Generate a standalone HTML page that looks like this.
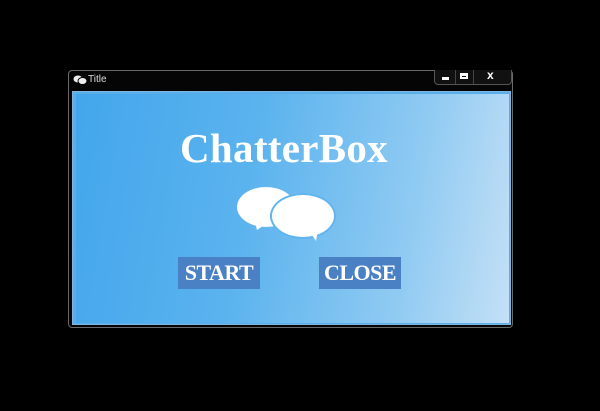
<!DOCTYPE html>
<html><head><meta charset="utf-8"><style>
html,body{margin:0;padding:0;background:#000;width:600px;height:411px;overflow:hidden;position:relative;font-family:"Liberation Serif",serif}
.frame{position:absolute;left:68px;top:70px;width:445px;height:258px;border:1px solid #6a6a6a;border-radius:4px;background:#050505;box-sizing:border-box}
.title{position:absolute;left:88px;top:74px;color:#ddd;font:10px "Liberation Sans",sans-serif}
.btns{position:absolute;left:434px;top:70px;width:78px;height:15px;border:1px solid #555;border-top:none;border-radius:0 0 4px 4px;background:#111;box-sizing:border-box}
.content{position:absolute;left:72px;top:91px;width:439px;height:234px;border:1px solid #7fb6e0;box-sizing:border-box;background:#5aaee9}
.inner{position:absolute;left:76px;top:94px;width:433px;height:229px;background:linear-gradient(100deg,#43a6ec 0%,#5bb3ee 40%,#8fcaf2 75%,#c4e0f6 100%)}
.h{position:absolute;left:0;width:568px;top:124px;text-align:center;color:#fff;font-weight:bold;font-size:41px;letter-spacing:0.3px}
.b{position:absolute;top:257px;height:32px;width:82px;background:#4a80c4;color:#fff;font-weight:bold;font-size:22px;line-height:32px;text-align:center;letter-spacing:-0.5px}
</style></head><body>
<div class="frame"></div>
<svg style="position:absolute;left:73px;top:75px" width="14" height="10"><ellipse cx="5" cy="4" rx="4.5" ry="3.5" fill="#eee"/><ellipse cx="9.5" cy="6" rx="4.5" ry="3.5" fill="#eee" stroke="#000" stroke-width="1"/></svg>
<div class="title">Title</div>
<div class="btns">
<div style="position:absolute;left:7px;top:7px;width:7px;height:3px;background:#fff"></div>
<div style="position:absolute;left:25px;top:3px;width:8px;height:6px;border:2px solid #fff;border-top-width:3px;box-sizing:border-box"></div>
<div style="position:absolute;left:20px;top:0;width:1px;height:14px;background:#444"></div>
<div style="position:absolute;left:38px;top:0;width:1px;height:14px;background:#444"></div>
<div style="position:absolute;left:52px;top:-2px;color:#fff;font:bold 12px 'Liberation Sans',sans-serif">x</div>
</div>
<div class="content"></div>
<div class="inner"></div>
<div class="h">ChatterBox</div>
<svg style="position:absolute;left:230px;top:180px" width="120" height="65">
<ellipse cx="36" cy="27" rx="29" ry="20" fill="#fff"/>
<path d="M25 42 L27 50 L36 44 Z" fill="#fff"/>
<ellipse cx="73" cy="36" rx="33" ry="23" fill="#61b5ee"/>
<ellipse cx="73" cy="36" rx="31" ry="21" fill="#fff"/>
<path d="M80 52 L86 61 L88 50 Z" fill="#fff"/>
</svg>
<div class="b" style="left:178px">START</div>
<div class="b" style="left:319px">CLOSE</div>
</body></html>
